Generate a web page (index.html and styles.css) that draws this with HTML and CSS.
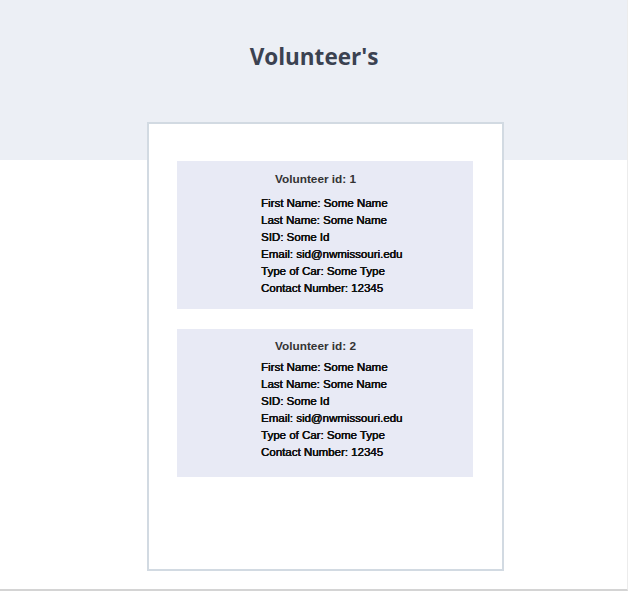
FILE: index.html
```html
<!DOCTYPE html>
<html>
<head>
<meta charset="utf-8">
<link rel="stylesheet" href="styles.css">
</head>
<body>
<div class="page">
  <header class="band">
    <h1 class="title">Volunteer's</h1>
  </header>
  <main class="card">
    <section class="vol">
      <h2 class="vol-id">Volunteer id: 1</h2>
      <div class="fields">
        <p class="field">First Name: Some Name</p>
        <p class="field">Last Name: Some Name</p>
        <p class="field">SID: Some Id</p>
        <p class="field">Email: sid@nwmissouri.edu</p>
        <p class="field">Type of Car: Some Type</p>
        <p class="field">Contact Number: 12345</p>
      </div>
    </section>
    <section class="vol vol-compact">
      <h2 class="vol-id">Volunteer id: 2</h2>
      <div class="fields">
        <p class="field">First Name: Some Name</p>
        <p class="field">Last Name: Some Name</p>
        <p class="field">SID: Some Id</p>
        <p class="field">Email: sid@nwmissouri.edu</p>
        <p class="field">Type of Car: Some Type</p>
        <p class="field">Contact Number: 12345</p>
      </div>
    </section>
  </main>
</div>
</body>
</html>
```
FILE: styles.css
```css
html, body {
  margin: 0;
  padding: 0;
  background: #ffffff;
}
.page {
  width: 627px;
  height: 589px;
  border-right: 1px solid #ececec;
  border-bottom: 2px solid #d4d4d4;
  background: linear-gradient(#eceff5 0, #eceff5 160px, #ffffff 160px);
  overflow: hidden;
}
.band {
  height: 122px;
  display: flex;
  justify-content: center;
}
.title {
  margin: 41px 0 0 0;
  font-family: "Open Sans", sans-serif;
  font-weight: 700;
  font-size: 22.5px;
  line-height: 32px;
  color: #3b4251;
  padding-left: 1px;
}
.card {
  margin-left: 147px;
  width: 357px;
  height: 449px;
  border: 2px solid #d2dae2;
  background: #ffffff;
  padding: 37px 0 0 28px;
  box-sizing: border-box;
  display: flex;
  flex-direction: column;
  gap: 20px;
}
.vol {
  width: 296px;
  height: 148px;
  background: #e8eaf5;
  font-family: "Liberation Sans", Arial, sans-serif;
  color: #1c1c1c;
  box-sizing: border-box;
  padding-top: 8px;
}
.vol-id {
  margin: 0 0 6px 98px;
  font-size: 11.8px;
  font-weight: 700;
  line-height: 20px;
  color: #333333;
}
.vol-compact {
  padding-top: 7px;
}
.vol-compact .vol-id {
  margin-bottom: 3px;
}
.fields {
  padding-left: 84px;
}
.field {
  margin: 0;
  font-size: 11.5px;
  line-height: 17px;
  font-weight: 400;
  color: #111111;
  text-shadow: 0 0 0.4px #111111, 0.3px 0 0 #111111;
}
```
